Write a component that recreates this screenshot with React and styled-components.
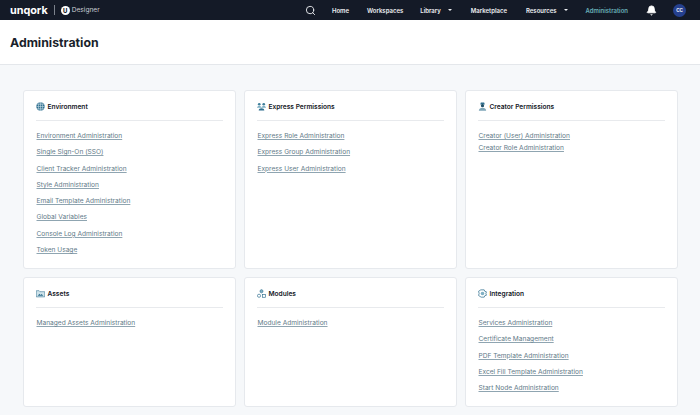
import React from "react";
import styled, { createGlobalStyle } from "styled-components";
import { Search, Bell } from "lucide-react";

const GlobalStyle = createGlobalStyle`
  html, body {
    margin: 0;
    padding: 0;
    background: #f6f8fa;
    font-family: Inter, "Liberation Sans", sans-serif;
  }
`;

const Page = styled.div`
  width: 700px;
  height: 415px;
  overflow: hidden;
  display: flex;
  flex-direction: column;
`;

const Nav = styled.div`
  height: 20px;
  flex: none;
  background: #141a27;
  display: flex;
  align-items: center;
  color: #fff;
  padding: 0 14px 0 10px;
`;

const Logo = styled.div`
  font-size: 10.800px;
  font-weight: 700;
  color: #fff;
`;

const LogoDivider = styled.div`
  width: 1px;
  height: 10px;
  background: #7c828c;
  margin: 0 6px 0 6px;
`;

const LogoBadge = styled.div`
  width: 9px;
  height: 9px;
  border-radius: 50%;
  background: #fff;
  color: #141a27;
  font-size: 6px;
  font-weight: 800;
  display: flex;
  align-items: center;
  justify-content: center;
`;

const Product = styled.div`
  font-size: 6.600px;
  color: #c9cdd3;
  margin-left: 2px;
`;

const NavItems = styled.div`
  margin-left: auto;
  display: flex;
  align-items: center;
`;

const NavLink = styled.div`
  font-size: 6px;
  font-weight: 600;
  color: ${({ $active }) => ($active ? "#68b0b8" : "#eef0f3")};
  margin-left: ${({ $gap }) => $gap}px;
  display: flex;
  align-items: center;
  white-space: nowrap;
`;

const Caret = styled.span`
  width: 0;
  height: 0;
  border-left: 2.200px solid transparent;
  border-right: 2.200px solid transparent;
  border-top: 2.600px solid #eef0f3;
  margin-left: 7px;
`;

const Avatar = styled.div`
  width: 13px;
  height: 13px;
  border-radius: 50%;
  background: #25408f;
  color: #fff;
  font-size: 4.500px;
  font-weight: 700;
  margin-left: 16px;
  display: flex;
  align-items: center;
  justify-content: center;
`;

const Header = styled.div`
  height: 44px;
  flex: none;
  background: #fff;
  border-bottom: 1px solid #e4e7eb;
  display: flex;
  align-items: center;
  padding-left: 10px;
`;

const Title = styled.h1`
  margin: 0;
  font-size: 12.300px;
  font-weight: 700;
  color: #1a1f2b;
`;

const Grid = styled.div`
  display: grid;
  grid-template-columns: repeat(3, 213.500px);
  grid-template-rows: 179px 130px;
  column-gap: 7.500px;
  row-gap: 8px;
  padding: 25px 0 0 22.500px;
`;

const Card = styled.div`
  background: #fff;
  border: 1px solid #e6e9ed;
  border-radius: 3px;
  padding: 0 12px;
  box-sizing: border-box;
`;

const CardHead = styled.div`
  height: 30px;
  box-sizing: border-box;
  border-bottom: 1px solid #e8eaed;
  display: flex;
  align-items: center;
  gap: 3px;
  padding-top: 2px;
  margin-bottom: 11px;
`;

const CardTitle = styled.div`
  font-size: 6.600px;
  font-weight: 600;
  color: #14181f;
`;

const IconBox = styled.svg`
  width: 9px;
  height: 9px;
  flex: none;
`;

const LinkList = styled.div`
  display: flex;
  flex-direction: column;
  gap: ${({ $gap }) => $gap}px;
  padding-left: 1px;
`;

const AdminLink = styled.a`
  font-size: 6.600px;
  line-height: 9px;
  color: #5f7a88;
  text-decoration: underline;
  text-decoration-color: #8fa5b1;
  text-underline-offset: 1px;
  width: fit-content;
  white-space: nowrap;
`;

const GlobeIcon = () => (
  <IconBox viewBox="0 0 16 16">
    <circle cx="8" cy="8" r="7.500" fill="#2f6f8f" />
    <path d="M0.500 8h15M8 .5v15M2 4h12M2 12h12" stroke="#cfe3ea" strokeWidth="1" fill="none" />
    <ellipse cx="8" cy="8" rx="3.600" ry="7.500" stroke="#cfe3ea" strokeWidth="1" fill="none" />
  </IconBox>
);

const GroupIcon = () => (
  <IconBox viewBox="0 0 16 16">
    <circle cx="4" cy="4" r="2.400" fill="#3f7f9b" />
    <circle cx="12" cy="4" r="2.400" fill="#3f7f9b" />
    <path d="M0 10c0-2 2-3 4-3s4 1 4 3zM8 10c0-2 2-3 4-3s4 1 4 3z" fill="#7fb0c4" />
    <path d="M3 15c0-2.400 2.200-4 5-4s5 1.600 5 4z" fill="#2f6f8f" />
  </IconBox>
);

const CreatorIcon = () => (
  <IconBox viewBox="0 0 16 16">
    <path d="M4 4.500 5 1h6l1 3.500z" fill="#2f6f8f" />
    <circle cx="8" cy="6.500" r="2.800" fill="#1f4f68" />
    <path d="M1.500 15.500c0-3.600 3-5.500 6.500-5.500s6.500 1.900 6.500 5.500z" fill="#7fa6b8" />
  </IconBox>
);

const FolderIcon = () => (
  <IconBox viewBox="0 0 16 16">
    <path d="M.5 3h5l1.500 1.800h8.500V14H.5z" fill="#cfe3ea" stroke="#2f6f8f" strokeWidth="1" />
    <path d="M3 12l3-3.500 2 2 2-1.500 3 3z" fill="#2f6f8f" />
  </IconBox>
);

const ModulesIcon = () => (
  <IconBox viewBox="0 0 16 16">
    <path d="M8 1l2.600 1.500v3L8 7 5.400 5.500v-3z" fill="#7fb0c4" stroke="#2f6f8f" strokeWidth="1" />
    <circle cx="3.600" cy="12" r="2.800" fill="none" stroke="#2f6f8f" strokeWidth="1.200" />
    <rect x="9.600" y="9.500" width="5.200" height="5.200" fill="none" stroke="#2f6f8f" strokeWidth="1.200" />
  </IconBox>
);

const IntegrationIcon = () => (
  <IconBox viewBox="0 0 16 16">
    <path d="M5 1.500h6l1 2.500 3 1-1 3 1 3-3 1-1 2.500H5.500L1 11.500 2 8 1 4z" fill="none" stroke="#2f6f8f" strokeWidth="1.300" />
    <circle cx="8" cy="8" r="3.200" fill="#7fb0c4" />
  </IconBox>
);

const cards = [
  {
    title: "Environment",
    icon: GlobeIcon,
    gap: 7.300,
    links: [
      "Environment Administration",
      "Single Sign-On (SSO)",
      "Client Tracker Administration",
      "Style Administration",
      "Email Template Administration",
      "Global Variables",
      "Console Log Administration",
      "Token Usage",
    ],
  },
  {
    title: "Express Permissions",
    icon: GroupIcon,
    gap: 7.300,
    links: [
      "Express Role Administration",
      "Express Group Administration",
      "Express User Administration",
    ],
  },
  {
    title: "Creator Permissions",
    icon: CreatorIcon,
    gap: 3,
    links: ["Creator (User) Administration", "Creator Role Administration"],
  },
  {
    title: "Assets",
    icon: FolderIcon,
    gap: 7.300,
    links: ["Managed Assets Administration"],
  },
  {
    title: "Modules",
    icon: ModulesIcon,
    gap: 7.300,
    links: ["Module Administration"],
  },
  {
    title: "Integration",
    icon: IntegrationIcon,
    gap: 7.300,
    links: [
      "Services Administration",
      "Certificate Management",
      "PDF Template Administration",
      "Excel Fill Template Administration",
      "Start Node Administration",
    ],
  },
];

const App = () => (
  <Page>
    <GlobalStyle />
    <Nav>
      <Logo>unqork</Logo>
      <LogoDivider />
      <LogoBadge>U</LogoBadge>
      <Product>Designer</Product>
      <NavItems>
        <Search size={11} color="#eef0f3" strokeWidth={2} />
        <NavLink $gap={16}>Home</NavLink>
        <NavLink $gap={18}>Workspaces</NavLink>
        <NavLink $gap={17}>
          Library
          <Caret />
        </NavLink>
        <NavLink $gap={19}>Marketplace</NavLink>
        <NavLink $gap={19}>
          Resources
          <Caret />
        </NavLink>
        <NavLink $gap={18} $active>
          Administration
        </NavLink>
        <NavLink $gap={18}>
          <Bell size={11} color="#fff" fill="#fff" />
        </NavLink>
        <Avatar>CC</Avatar>
      </NavItems>
    </Nav>
    <Header>
      <Title>Administration</Title>
    </Header>
    <Grid>
      {cards.map((card) => (
        <Card key={card.title}>
          <CardHead>
            <card.icon />
            <CardTitle>{card.title}</CardTitle>
          </CardHead>
          <LinkList $gap={card.gap}>
            {card.links.map((link) => (
              <AdminLink key={link}>{link}</AdminLink>
            ))}
          </LinkList>
        </Card>
      ))}
    </Grid>
  </Page>
);

export default App;
